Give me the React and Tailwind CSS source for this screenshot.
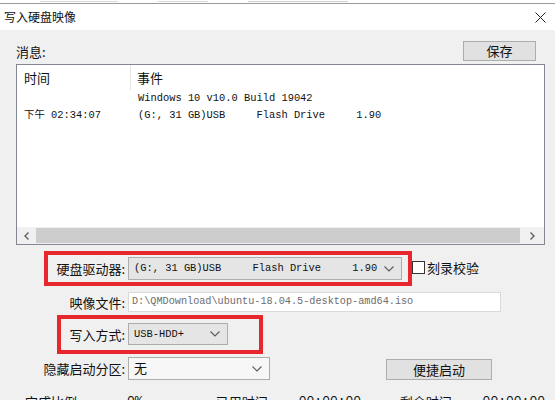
import React from "react";

const ui = { fontFamily: '"Noto Sans CJK SC", "Liberation Sans", sans-serif' };
const mono = { fontFamily: '"Liberation Mono", "Noto Sans CJK SC", monospace' };

function Chevron() {
  return (
    <svg width="10" height="6" viewBox="0 0 10 6" className="shrink-0">
      <path d="M0.5 0.5 L5 5 L9.5 0.5" fill="none" stroke="#5a5a5a" strokeWidth="1.1" />
    </svg>
  );
}

function Combo({ width, children, white }) {
  return (
    <div
      className={`flex items-center justify-between h-[23px] border border-[#adadad] pl-[5px] pr-[7px] ${white ? "bg-[#f7f7f7]" : "bg-[#e5e5e5]"} ${width}`}
    >
      <div className="text-[10.4px] text-[#111] whitespace-pre leading-none" style={mono}>
        {children}
      </div>
      <Chevron />
    </div>
  );
}

function Button({ children, className }) {
  return (
    <div
      className={`flex items-center justify-center bg-[#e1e1e1] border border-[#adadad] text-[13px] text-[#111] ${className}`}
      style={ui}
    >
      {children}
    </div>
  );
}

export default function App() {
  return (
    <div className="w-[555px] h-[400px] overflow-hidden bg-[#f0f0f0] text-[#111]" style={ui}>
      {/* window behind, barely visible */}
      <div className="h-[4px] bg-white border-b border-[#9a9a9a] flex gap-[40px] pl-[40px]">
        <div className="w-[78px] h-[1px] mt-[1px] bg-[#d8d8d8]" />
        <div className="w-[50px] h-[1px] mt-[1px] bg-[#d8d8d8]" />
        <div className="w-[100px] h-[1px] mt-[1px] bg-[#d0d0d0]" />
      </div>

      {/* title bar */}
      <div className="h-[26px] bg-white flex items-center justify-between pl-[4px] pr-[9px]">
        <span className="text-[12px] leading-none">写入硬盘映像</span>
        <svg width="11" height="11" viewBox="0 0 11 11">
          <path d="M0.5 0.5 L10.5 10.5 M10.5 0.5 L0.5 10.5" stroke="#222" strokeWidth="1" />
        </svg>
      </div>

      <div className="pl-[16px] pr-[10px]">
        {/* message header */}
        <div className="mt-[11px] h-[20px] flex items-center justify-between pr-[9px]">
          <span className="text-[13px] leading-none">消息:</span>
          <Button className="w-[73px] h-[20px]">保存</Button>
        </div>

        {/* log list */}
        <div className="mt-[3px] h-[181px] bg-white border border-[#828790] flex flex-col">
          <div className="h-[25px] flex items-center">
            <div className="w-[114px] h-full flex items-center pl-[7px] border-r border-[#e5e5e5] text-[13px]">时间</div>
            <div className="pl-[6px] text-[13px]">事件</div>
          </div>
          <div className="text-[10.4px] leading-[17px] whitespace-pre" style={mono}>
            <div className="flex">
              <div className="w-[115px]" />
              <div className="pl-[6px]">Windows 10 v10.0 Build 19042</div>
            </div>
            <div className="flex">
              <div className="w-[115px] pl-[7px]">下午 02:34:07</div>
              <div className="pl-[6px]">(G:, 31 GB)USB     Flash Drive     1.90</div>
            </div>
          </div>
          <div className="flex-1" />
          <div className="h-[17px] flex items-stretch bg-[#f0f0f0]">
            <div className="w-[19px] flex items-center justify-center">
              <svg width="6" height="8" viewBox="0 0 6 8">
                <path d="M4.5 0.5 L1 4 L4.5 7.5" fill="none" stroke="#606060" strokeWidth="1.4" />
              </svg>
            </div>
            <div className="flex-1 bg-[#cdcdcd] my-[1px]" />
            <div className="w-[24px] flex items-center justify-center">
              <svg width="6" height="8" viewBox="0 0 6 8">
                <path d="M1.5 0.5 L5 4 L1.5 7.5" fill="none" stroke="#606060" strokeWidth="1.4" />
              </svg>
            </div>
          </div>
        </div>

        {/* drive row */}
        <div className="mt-[6px] flex items-center">
          <div className="ml-[28px] border-4 border-[#e8262d] h-[35px] flex items-center pr-[6px]">
            <div className="w-[80px] text-right text-[13px] leading-none pr-[3px]">硬盘驱动器:</div>
            <Combo width="w-[274px]">{"(G:, 31 GB)USB     Flash Drive     1.90"}</Combo>
          </div>
          <div className="w-[13px] h-[13px] border border-[#333] bg-white mb-[2px]" />
          <span className="ml-[2px] text-[13px] leading-none mb-[2px]">刻录校验</span>
        </div>

        {/* image file */}
        <div className="mt-[6px] flex items-center h-[20px]">
          <div className="w-[112px] text-right text-[13px] leading-none pr-[3px]">映像文件:</div>
          <div className="w-[373px] h-[20px] bg-white border border-[#d9d9d9] flex items-center pl-[3px]">
            <span className="text-[10.2px] text-[#6d6d6d] whitespace-pre leading-none" style={mono}>
              {"D:\\QMDownload\\ubuntu-18.04.5-desktop-amd64.iso"}
            </span>
          </div>
        </div>

        {/* write mode */}
        <div className="mt-[3px] flex">
          <div className="ml-[41px] border-4 border-[#e8262d] h-[39px] w-[206px] flex items-center pb-[1px]">
            <div className="w-[67px] text-right text-[13px] leading-none pr-[3px]">写入方式:</div>
            <Combo width="w-[100px] !h-[22px]">USB-HDD+</Combo>
          </div>
        </div>

        {/* hidden partition */}
        <div className="mt-[3px] flex items-center h-[23px]">
          <div className="w-[112px] text-right text-[13px] leading-none pr-[3px]">隐藏启动分区:</div>
          <Combo width="w-[142px]" white>
            <span className="text-[13px]" style={ui}>无</span>
          </Combo>
          <Button className="ml-[116px] w-[106px] h-[21px] mt-[2px]">便捷启动</Button>
        </div>

        {/* status row (cut off by the screenshot edge) */}
        <div className="mt-[15px] flex items-center text-[13px] leading-none">
          <span className="ml-[9px] w-[102px]">完成比例:</span>
          <span className="w-[89px]" style={mono}>0%</span>
          <span className="w-[83px]">已用时间:</span>
          <span className="w-[101px]" style={mono}>00:00:00</span>
          <span className="w-[83px]">剩余时间:</span>
          <span style={mono}>00:00:00</span>
        </div>
      </div>
    </div>
  );
}
